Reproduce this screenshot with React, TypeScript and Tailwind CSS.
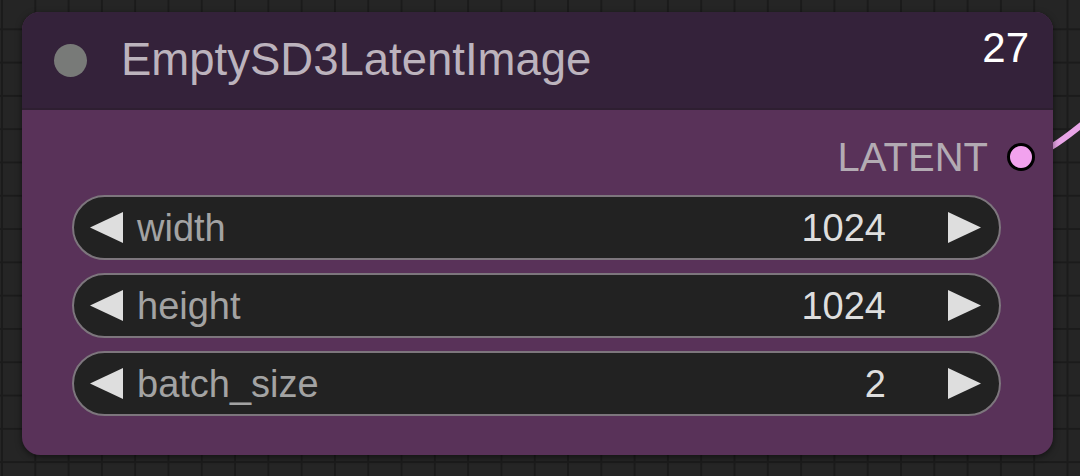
const widgets = [
  { name: "width", value: "1024" },
  { name: "height", value: "1024" },
  { name: "batch_size", value: "2" },
];

function Arrow({ dir }: { dir: "left" | "right" }) {
  return (
    <svg width="33" height="31" viewBox="0 0 33 31" className="shrink-0">
      {dir === "left" ? (
        <polygon points="33,0 33,31 0,15.5" fill="#dedede" />
      ) : (
        <polygon points="0,0 0,31 33,15.5" fill="#dedede" />
      )}
    </svg>
  );
}

function NumberWidget({ name, value }: { name: string; value: string }) {
  return (
    <div className="flex h-[65px] items-center rounded-full border-2 border-[#7d767d] bg-[#222222] pl-[16px] pr-[18px]">
      <Arrow dir="left" />
      <span className="ml-[14px] flex-1 text-[38px] leading-none text-[#a3a3a3]">{name}</span>
      <span className="text-[38px] leading-none text-[#dedede]">{value}</span>
      <span className="ml-[62px]">
        <Arrow dir="right" />
      </span>
    </div>
  );
}

export default function App() {
  return (
    <div
      className="relative h-[476px] w-[1080px] overflow-hidden bg-[#252525] bg-[linear-gradient(#1b1b1b_2px,transparent_2px),linear-gradient(90deg,#1b1b1b_2px,transparent_2px)] bg-[size:33.3px_33.3px] bg-[position:1px_-5px] pl-[22px] pt-[12px] font-['Liberation_Sans',Arial,sans-serif]"
    >
      {/* wire leaving the output slot */}
      <svg className="absolute left-0 top-0" width="1080" height="476" viewBox="0 0 1080 476">
        <path d="M1020 156 C1042 156, 1058 144, 1084 123" stroke="#e9a5e8" strokeWidth="6" fill="none" />
      </svg>

      <div className="relative flex h-[443px] w-[1031px] flex-col overflow-hidden rounded-[18px] bg-[#593259] shadow-[0_2px_6px_rgba(0,0,0,0.5)]">
        <div className="flex h-[98px] shrink-0 items-center border-b-2 border-[#2e1f31] bg-[#34223a] pl-[32px] pr-[24px]">
          <div className="h-[33px] w-[33px] shrink-0 rounded-full bg-[#787a78]" />
          <div className="ml-[34px] flex-1 text-[45.5px] leading-none text-[#bcb3bd]">EmptySD3LatentImage</div>
          <div className="mb-[24px] text-[42px] leading-none text-white">27</div>
        </div>

        <div className="flex flex-col pl-[50px] pr-[52px]">
          <div className="flex h-[85px] items-center justify-end pt-[9px]">
            <span className="text-[40px] leading-none text-[#b3abb3]">LATENT</span>
            <span className="relative z-10 ml-[19px] mr-[-34px] h-[28px] w-[28px] rounded-full border-[3px] border-black bg-[#f2a2ee]" />
          </div>
          <div className="flex flex-col gap-[13px]">
            {widgets.map((w) => (
              <NumberWidget key={w.name} name={w.name} value={w.value} />
            ))}
          </div>
        </div>
      </div>
    </div>
  );
}
